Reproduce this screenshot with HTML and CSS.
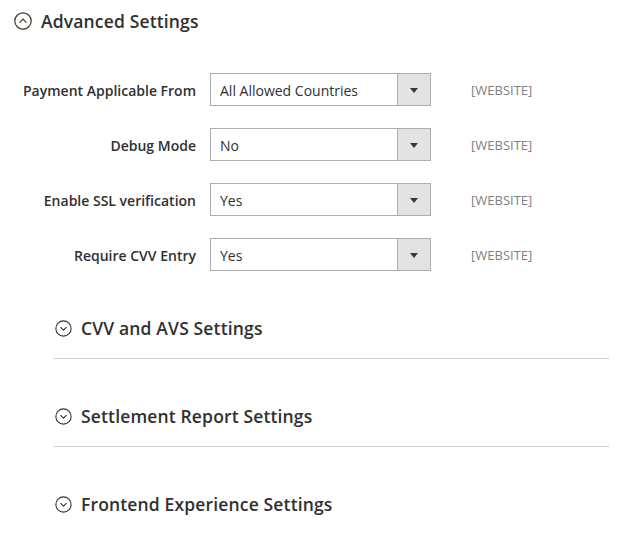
FILE: index.html
```html
<!DOCTYPE html>
<html>
<head>
<meta charset="utf-8">
<link rel="stylesheet" href="styles.css">
</head>
<body>
<div class="page">
  <div class="main-title">
    <svg class="toggle-icon big" viewBox="0 0 18 18"><circle cx="9" cy="9" r="8.2"/><path d="M5.6 10.6 L9 7.2 L12.4 10.6"/></svg>
    <span>Advanced Settings</span>
  </div>
  <div class="form">
    <div class="row">
      <label class="label">Payment Applicable From</label>
      <div class="select"><span class="value">All Allowed Countries</span><span class="btn"><i class="arrow"></i></span></div>
      <span class="scope">[WEBSITE]</span>
    </div>
    <div class="row">
      <label class="label">Debug Mode</label>
      <div class="select"><span class="value">No</span><span class="btn"><i class="arrow"></i></span></div>
      <span class="scope">[WEBSITE]</span>
    </div>
    <div class="row">
      <label class="label">Enable SSL verification</label>
      <div class="select"><span class="value">Yes</span><span class="btn"><i class="arrow"></i></span></div>
      <span class="scope">[WEBSITE]</span>
    </div>
    <div class="row">
      <label class="label">Require CVV Entry</label>
      <div class="select"><span class="value">Yes</span><span class="btn"><i class="arrow"></i></span></div>
      <span class="scope">[WEBSITE]</span>
    </div>
  </div>
  <div class="subsections">
    <div class="sub">
      <svg class="toggle-icon" viewBox="0 0 18 18"><circle cx="9" cy="9" r="8.1"/><path d="M5.8 7.6 L9 10.8 L12.2 7.6"/></svg>
      <span>CVV and AVS Settings</span>
    </div>
    <div class="sub">
      <svg class="toggle-icon" viewBox="0 0 18 18"><circle cx="9" cy="9" r="8.1"/><path d="M5.8 7.6 L9 10.8 L12.2 7.6"/></svg>
      <span>Settlement Report Settings</span>
    </div>
    <div class="sub last">
      <svg class="toggle-icon" viewBox="0 0 18 18"><circle cx="9" cy="9" r="8.1"/><path d="M5.8 7.6 L9 10.8 L12.2 7.6"/></svg>
      <span>Frontend Experience Settings</span>
    </div>
  </div>
</div>
</body>
</html>
```

FILE: styles.css
```css
html, body {
  margin: 0;
  padding: 0;
  background: #ffffff;
}
body {
  font-family: "Open Sans", "Liberation Sans", sans-serif;
  color: #303030;
}
.page {
  padding-top: 9px;
  width: 636px;
}
.main-title {
  display: flex;
  align-items: center;
  height: 24px;
  padding-left: 14px;
  gap: 9px;
  font-size: 17.5px;
  font-weight: 600;
  letter-spacing: 0.15px;
  color: #303030;
}
.toggle-icon {
  width: 17px;
  height: 17px;
  flex: none;
}
.toggle-icon circle,
.toggle-icon path {
  fill: none;
  stroke: #41362f;
  stroke-width: 1.2;
}
.toggle-icon.big {
  width: 18px;
  height: 18px;
}
.form {
  margin-top: 40px;
  display: flex;
  flex-direction: column;
  gap: 22px;
}
.row {
  display: grid;
  grid-template-columns: 196px 221px auto;
  column-gap: 14px;
  align-items: center;
  height: 33px;
}
.label {
  text-align: right;
  font-size: 14px;
  font-weight: 600;
  color: #303030;
  padding-top: 1px;
}
.select {
  display: flex;
  height: 33px;
  box-sizing: border-box;
  border: 1px solid #adadad;
  background: #fff;
}
.value {
  flex: 1;
  padding-left: 9px;
  font-size: 14px;
  line-height: 33px;
  color: #303030;
}
.btn {
  width: 32px;
  flex: none;
  background: #e3e3e3;
  border-left: 1px solid #adadad;
  display: flex;
  align-items: center;
  justify-content: center;
}
.arrow {
  width: 0;
  height: 0;
  border-left: 4px solid transparent;
  border-right: 4px solid transparent;
  border-top: 5px solid #41362f;
  margin-top: 1px;
}
.scope {
  margin-left: 26px;
  font-size: 13px;
  color: #808080;
  padding-top: 1px;
}
.subsections {
  margin-left: 54px;
  width: 555px;
}
.sub {
  display: flex;
  align-items: center;
  gap: 9px;
  height: 24px;
  padding-top: 45px;
  padding-bottom: 18px;
  border-bottom: 1px solid #cccccc;
  font-size: 17.5px;
  font-weight: 600;
  letter-spacing: 0.15px;
  color: #303030;
  box-sizing: content-box;
  padding-left: 1px;
}
.sub.last {
  border-bottom: none;
}
```
